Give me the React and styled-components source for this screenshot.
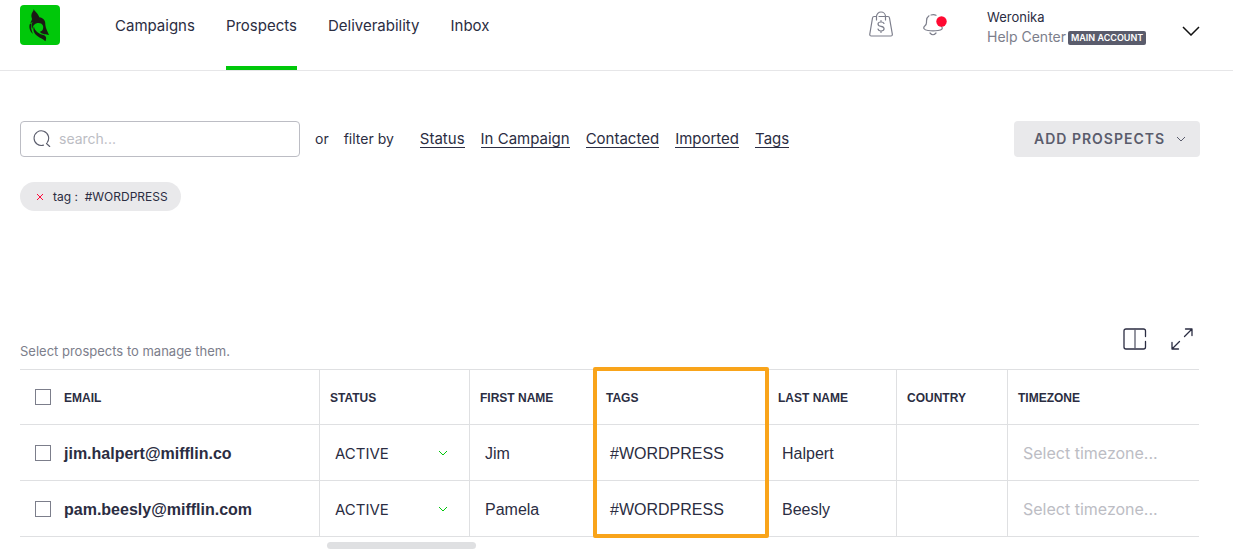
import React, { useState } from 'react';
import styled, { createGlobalStyle, css } from 'styled-components';

const GlobalStyle = createGlobalStyle`
    * {
        box-sizing: border-box;
    }
    body {
        margin: 0;
        background: #fff;
        color: #2b2d42;
        font-family: Inter, "Open Sans", sans-serif;
        font-size: 14px;
    }
    button, input, select {
        font: inherit;
        color: inherit;
    }
    button {
        padding: 0;
        border: 0;
        background: none;
        cursor: pointer;
    }
    svg {
        display: block;
        fill: none;
        stroke: currentColor;
    }
`;

const Header = styled.header`
    display: flex;
    align-items: flex-start;
    height: 71px;
    padding: 0 33px 0 20px;
    border-bottom: 1px solid #e6e6e8;
`;

const Logo = styled.a`
    width: 40px;
    height: 40px;
    margin: 5px 55px 0 0;
    border-radius: 4px;
    background: #00c80a;
    color: #1a1a14;
`;

const Nav = styled.nav`
    display: flex;
    gap: 31px;
`;

const NavLink = styled.a`
    height: 70px;
    color: inherit;
    font-size: 15px;
    line-height: 51px;
    text-decoration: none;
    border-bottom: 4px solid ${({ $active }) => ($active ? '#00c80a' : 'transparent')};
`;

const HeaderTools = styled.div`
    display: flex;
    align-items: flex-start;
    margin-left: auto;
`;

const IconButton = styled.button`
    margin: ${({ $margin }) => $margin || '0'};
    color: ${({ $color }) => $color || '#2b2d42'};
`;

const Account = styled.div`
    width: 173px;
    padding-top: 7px;
    font-size: 13px;
    line-height: 20px;
`;

const HelpRow = styled.div`
    display: flex;
    align-items: center;
    gap: 2px;
    white-space: nowrap;
    color: #7c7e8b;
    font-size: 14px;
`;

const AccountTag = styled.span`
    margin-top: 2px;
    padding: 0 3px;
    border-radius: 2px;
    background: #5a5c6c;
    color: #fff;
    font-size: 9px;
    font-weight: 600;
    line-height: 14px;
`;

const Page = styled.main`
    padding: 50px 33px 0 20px;
`;

const Toolbar = styled.div`
    display: flex;
    align-items: center;
    height: 36px;
`;

const SearchBox = styled.label`
    display: flex;
    align-items: center;
    gap: 8px;
    width: 280px;
    height: 36px;
    padding: 0 12px;
    border: 1px solid #bcbdc4;
    border-radius: 4px;
    color: #5a5c6c;

    input {
        flex: 1;
        min-width: 0;
        padding: 0 0 2px;
        border: 0;
        outline: 0;
        background: none;
        font-size: 14px;
    }
    input::placeholder {
        color: #bcbdc4;
        opacity: 1;
    }
`;

const FilterText = styled.span`
    margin-left: 15px;
    padding-bottom: 2px;
`;

const Filters = styled.div`
    display: flex;
    gap: 16px;
    margin-left: 26px;
`;

const FilterLink = styled.a`
    color: inherit;
    font-size: 15px;
    line-height: 16px;
    text-decoration: none;
    border-bottom: 1px solid #2b2d42;
`;

const AddButton = styled.button`
    display: flex;
    align-items: center;
    justify-content: space-between;
    width: 186px;
    height: 36px;
    margin-left: auto;
    padding: 0 14px 1px 20px;
    border-radius: 4px;
    background: #e9e9eb;
    color: #5a5c6c;
    font-weight: 600;
    letter-spacing: 1px;
`;

const Chip = styled.div`
    display: inline-flex;
    align-items: center;
    height: 29px;
    margin-top: 25px;
    padding: 0 13px 0 16px;
    border-radius: 15px;
    background: #e9e9eb;
    font-size: 12px;
    white-space: pre;

    button {
        margin-right: 9px;
        color: #ff0a3c;
    }
`;

const TableTop = styled.div`
    display: flex;
    align-items: flex-end;
    justify-content: space-between;
    margin-top: 112px;
    height: 46px;
    padding-bottom: 10px;
    color: #7c7e8b;
    font-size: 13px;
    line-height: 16px;
`;

const TableTools = styled.div`
    display: flex;
    gap: 24px;
    padding: 0 7px 9px 0;
`;

const Table = styled.table`
    width: calc(100% - 1px);
    table-layout: fixed;
    border-collapse: separate;
    border-spacing: 0;
    border-top: 1px solid #dfe0e2;
    font-family: "Liberation Sans", Arial, sans-serif;
`;

const cell = css`
    padding: 2px 0 0 ${({ $pad }) => $pad || 10}px;
    border-bottom: 1px solid #dfe0e2;
    text-align: left;

    &:not(:last-child) {
        border-right: 1px solid #dfe0e2;
    }
`;

const Th = styled.th`
    ${cell}
    position: relative;
    width: ${({ $width }) => ($width ? `${$width}px` : 'auto')};
    height: 55px;
    font-size: 12px;
    font-weight: 700;
`;

const Td = styled.td`
    ${cell}
    height: 56px;
    font-size: 16px;
    font-weight: ${({ $bold }) => ($bold ? 700 : 400)};
`;

// cells that hold a control are centred without the text offset
const ControlTh = styled(Th)`
    padding-top: 0;
`;

const ControlTd = styled(Td)`
    padding-top: 0;
`;

// frame that spans the header and both rows of one column
const Highlight = styled.span`
    position: absolute;
    z-index: 1;
    top: -3px;
    left: -3px;
    right: -2px;
    height: 171px;
    border: 4px solid #f9a41a;
    border-radius: 2px;
    pointer-events: none;
`;

const CheckLabel = styled.label`
    display: flex;
    align-items: center;
    gap: 13px;

    span {
        padding-top: 2px;
    }
`;

const Checkbox = styled.input.attrs({ type: 'checkbox' })`
    appearance: none;
    width: 16px;
    height: 16px;
    margin: 0;
    border: 1px solid #7c7e8b;
    background: #fff;

    &:checked {
        background: #00c80a;
    }
`;

const SelectWrap = styled.div`
    display: flex;
    align-items: center;
    padding-right: 21px;
    color: #00c80a;
`;

const CellSelect = styled.select`
    appearance: none;
    flex: 1;
    min-width: 0;
    padding: ${({ $muted }) => ($muted ? 0 : 2)}px 0 0;
    border: 0;
    outline: 0;
    background: none;
    color: ${({ $muted }) => ($muted ? '#bcbdc4' : '#2b2d42')};
    font-family: Inter, "Open Sans", sans-serif;
    font-size: ${({ $muted }) => ($muted ? 16 : 15)}px;
`;

const ScrollThumb = styled.div`
    width: 149px;
    height: 7px;
    margin: 5px 0 0 307px;
    border-radius: 4px;
    background: #dfe0e2;
`;

const LogoIcon = () => (
    <svg width="40" height="40" viewBox="0 0 120 120">
        <g fill="currentColor" stroke="none">
            <path d="M41 12C43 19 55 25 58 37C69 38 77 47 76 59C77 70 83 79 87 90C78 87 67 89 59 80C68 79 71 70 69 62C66 54 58 53 52 54C44 56 38 62 37 72C34 65 34 57 38 51L31 55C32 50 36 46 36 42C33 34 34 28 36 24C38 20 41 17 41 12Z" />
            <path d="M29 58L34 55C32 66 34 77 39 87C31 81 26 70 29 58Z" />
            <path d="M42 64C43 76 52 83 62 88C70 90 76 91 78 97C79 101 78 105 76 109C70 101 60 100 52 93C42 86 37 75 42 64Z" />
        </g>
    </svg>
);

const BagIcon = () => (
    <svg width="24" height="26" viewBox="0 0 24 26" strokeWidth="1.2" strokeLinecap="round" strokeLinejoin="round">
        <path d="M7.500 9V5.500a4.500 4.500 0 0 1 9 0V9M10 5.500H19Q20.300 5.500 20.500 7L23.300 23Q23.500 25 21.800 25H2.300Q.6 25 .8 23L3.500 7Q3.800 5.500 5 5.500H7" />
        <path d="M15 12.500Q14.500 11 12 11C8 11 8 14.800 12 15.300C16.200 15.800 16 20 12 20Q9.500 20 9 18M12 9.500V11M12 20V21.500" />
    </svg>
);

const BellIcon = () => (
    <svg width="24" height="22" viewBox="0 0 24 22" strokeWidth="1.2" strokeLinecap="round">
        <path d="M6 1.800Q3.500 3.500 3.500 7V8.500Q3.500 10.500 2 11.800C-.5 14 1 16 5 16.500Q10 17.300 15 16.500C19 16 20.300 14.500 18.300 12.200M8 1Q11 .2 13 1.300M7 19Q10 22.500 13 19" />
        <circle cx="18.500" cy="7.500" r="5.200" fill="#ff0a32" stroke="none" />
    </svg>
);

const SearchIcon = () => (
    <svg width="18" height="18" viewBox="0 0 18 18" strokeWidth="1.100" strokeLinecap="round">
        <path d="M10.500 15.100A7.300 7.300 0 1 1 14.200 12.500M13.500 13.500L16.700 16.500" />
    </svg>
);

const Chevron = ({ width = 8, height = 4, stroke = 1 }) => (
    <svg width={width + 2} height={height + 2} viewBox={`-1 -1 ${width + 2} ${height + 2}`} strokeWidth={stroke}>
        <path d={`M0 0L${width / 2} ${height}L${width} 0`} />
    </svg>
);

const CrossIcon = () => (
    <svg width="8" height="8" viewBox="0 0 8 8">
        <path d="M1 1L7 7M7 1L1 7" />
    </svg>
);

const ColumnsIcon = () => (
    <svg width="24" height="22" viewBox="0 0 24 22" strokeWidth="1.300" strokeLinecap="round">
        <path d="M22.500 8.500V3Q22.500 1 20.500 1H3Q1 1 1 3V19Q1 21 3 21H20.500Q22.500 21 22.500 19V13.500" />
        <path d="M12 1V21" stroke="#5a5c6c" />
    </svg>
);

const ExpandIcon = () => (
    <svg width="22" height="22" viewBox="0 0 22 22" strokeWidth="1.300" strokeLinecap="round" strokeLinejoin="round">
        <path d="M13.500 8.500L21 1M14.500 1H21V7.500M8.500 13.500L1 21M1 14.500V21H7.500" />
    </svg>
);

const navItems = ['Campaigns', 'Prospects', 'Deliverability', 'Inbox'];
const filters = ['Status', 'In Campaign', 'Contacted', 'Imported', 'Tags'];

const columns = [
    { title: 'STATUS', width: 150 },
    { title: 'FIRST NAME', width: 126 },
    { title: 'TAGS', width: 172, highlight: true },
    { title: 'LAST NAME', width: 129 },
    { title: 'COUNTRY', width: 111 },
    { title: 'TIMEZONE' },
];

const prospects = [
    { email: 'jim.halpert@mifflin.co', firstName: 'Jim', lastName: 'Halpert', tags: '#WORDPRESS' },
    { email: 'pam.beesly@mifflin.com', firstName: 'Pamela', lastName: 'Beesly', tags: '#WORDPRESS' },
];

const ProspectRow = ({ prospect, checked, onToggle }) => (
    <tr>
        <ControlTd $pad={15} $bold>
            <CheckLabel>
                <Checkbox checked={checked} onChange={onToggle} />
                <span>{prospect.email}</span>
            </CheckLabel>
        </ControlTd>
        <ControlTd $pad={15}>
            <SelectWrap>
                <CellSelect aria-label={`Status of ${prospect.email}`}>
                    <option>ACTIVE</option>
                </CellSelect>
                <Chevron />
            </SelectWrap>
        </ControlTd>
        <Td $pad={15}>{prospect.firstName}</Td>
        <Td $pad={14}>{prospect.tags}</Td>
        <Td $pad={14}>{prospect.lastName}</Td>
        <Td />
        <ControlTd $pad={15}>
            <SelectWrap>
                <CellSelect $muted aria-label={`Timezone of ${prospect.email}`}>
                    <option>Select timezone...</option>
                </CellSelect>
            </SelectWrap>
        </ControlTd>
    </tr>
);

const App = () => {
    const [search, setSearch] = useState('');
    const [selected, setSelected] = useState([]);

    const toggle = (email) => {
        setSelected((list) => (list.includes(email) ? list.filter((item) => item !== email) : [...list, email]));
    };
    const allSelected = selected.length === prospects.length;
    const toggleAll = () => setSelected(allSelected ? [] : prospects.map((p) => p.email));

    return (
        <>
            <GlobalStyle />
            <Header>
                <Logo href="#" aria-label="Home"><LogoIcon /></Logo>
                <Nav>
                    {navItems.map((item) => (
                        <NavLink key={item} href="#" $active={item === 'Prospects'}>{item}</NavLink>
                    ))}
                </Nav>
                <HeaderTools>
                    <IconButton $margin="11px 30px 0 0" $color="#7c7e8b" aria-label="Billing"><BagIcon /></IconButton>
                    <IconButton $margin="14px 40px 0 0" $color="#7c7e8b" aria-label="Notifications"><BellIcon /></IconButton>
                    <Account>
                        <div>Weronika</div>
                        <HelpRow>
                            Help Center
                            <AccountTag>MAIN ACCOUNT</AccountTag>
                        </HelpRow>
                    </Account>
                    <IconButton $margin="26px 0 0 22px" $color="#111" aria-label="Account menu">
                        <Chevron width={16} height={8} stroke={1.5} />
                    </IconButton>
                </HeaderTools>
            </Header>
            <Page>
                <Toolbar>
                    <SearchBox>
                        <SearchIcon />
                        <input
                            aria-label="Search prospects"
                            placeholder="search..."
                            value={search}
                            onChange={(e) => setSearch(e.target.value)}
                        />
                    </SearchBox>
                    <FilterText>or</FilterText>
                    <FilterText>filter by</FilterText>
                    <Filters>
                        {filters.map((item) => <FilterLink key={item} href="#">{item}</FilterLink>)}
                    </Filters>
                    <AddButton>
                        ADD PROSPECTS
                        <Chevron />
                    </AddButton>
                </Toolbar>
                <Chip>
                    <button aria-label="Remove filter"><CrossIcon /></button>
                    {'tag :  #WORDPRESS'}
                </Chip>
                <TableTop>
                    <span>Select prospects to manage them.</span>
                    <TableTools>
                        <IconButton aria-label="Columns"><ColumnsIcon /></IconButton>
                        <IconButton aria-label="Full screen"><ExpandIcon /></IconButton>
                    </TableTools>
                </TableTop>
                <Table>
                    <thead>
                        <tr>
                            <ControlTh $width={300} $pad={15}>
                                <CheckLabel>
                                    <Checkbox checked={allSelected} onChange={toggleAll} />
                                    <span>EMAIL</span>
                                </CheckLabel>
                            </ControlTh>
                            {columns.map((column) => (
                                <Th key={column.title} $width={column.width}>
                                    {column.title}
                                    {column.highlight && <Highlight />}
                                </Th>
                            ))}
                        </tr>
                    </thead>
                    <tbody>
                        {prospects.map((prospect) => (
                            <ProspectRow
                                key={prospect.email}
                                prospect={prospect}
                                checked={selected.includes(prospect.email)}
                                onToggle={() => toggle(prospect.email)}
                            />
                        ))}
                    </tbody>
                </Table>
                <ScrollThumb />
            </Page>
        </>
    );
};

export default App;
